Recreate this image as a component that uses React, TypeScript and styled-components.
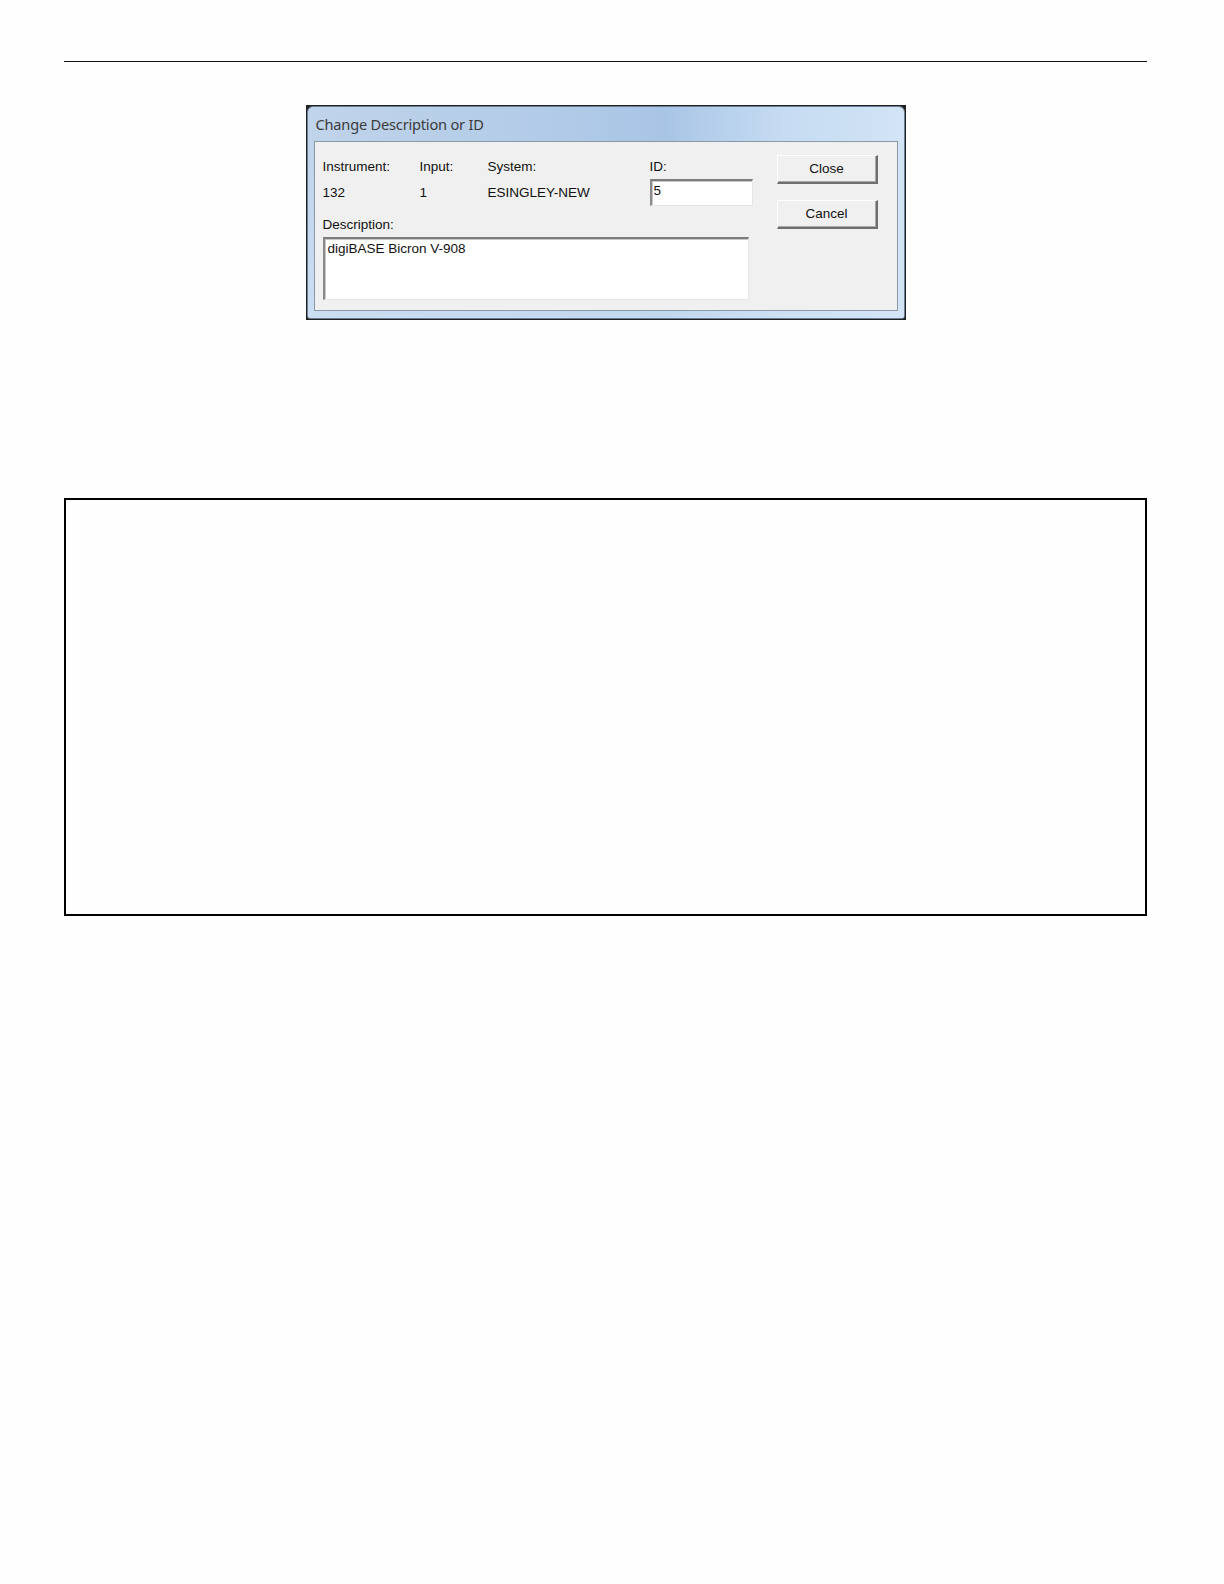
import React from 'react';
import styled, { createGlobalStyle } from 'styled-components';

const GlobalStyle = createGlobalStyle`
  html, body {
    margin: 0;
    padding: 0;
    background: #fefefe;
  }
  body {
    font-family: "Liberation Sans", Arial, sans-serif;
  }
`;

const Page = styled.div`
  width: 1083px;
  margin: 0 0 0 64px;
  padding-top: 61px;
  display: flex;
  flex-direction: column;
  align-items: center;
`;

const Rule = styled.hr`
  align-self: stretch;
  margin: 0;
  border: none;
  border-top: 1px solid #111;
`;

const Shot = styled.div`
  margin-top: 43px;
  width: 600px;
  height: 215px;
  box-sizing: border-box;
  background: #202020;
  padding: 1px;
  display: flex;
`;

const Window = styled.div`
  flex: 1;
  display: flex;
  flex-direction: column;
  border-radius: 6px 6px 3px 3px;
  border: 1px solid #6b7d93;
  background: linear-gradient(90deg, #c0d4ea 0%, #b4cce8 35%, #a9c5e6 60%, #c6dcf2 80%, #d2e4f5 100%);
  overflow: hidden;
`;

const TitleBar = styled.div`
  height: 34px;
  display: flex;
  align-items: center;
  padding-left: 8px;
  font-family: "Noto Sans", "Open Sans", sans-serif;
  font-size: 14.6px;
  letter-spacing: -0.2px;
  color: #3b3b3b;
`;

const Frame = styled.div`
  flex: 1;
  display: flex;
  padding: 0 6px 7px 6px;
  background: linear-gradient(180deg, rgba(255,255,255,0) 0%, rgba(210,228,246,0.6) 100%);
`;

const Client = styled.div`
  flex: 1;
  display: flex;
  background: #f0f0f0;
  border: 1px solid #8d98a6;
  padding: 13px 19px 0 8px;
  font-size: 13.5px;
  color: #111;
`;

const Fields = styled.div`
  width: 430px;
  margin-top: 4px;
  display: grid;
  grid-template-columns: 97px 68px 162px 103px;
  grid-template-rows: 16px 27px;
  row-gap: 4px;
  align-items: center;
  align-content: start;
`;

const Label = styled.div`
  line-height: 16px;
  white-space: nowrap;
`;

const Value = styled.div`
  line-height: 16px;
  white-space: nowrap;
`;

const sunken = `
  box-sizing: border-box;
  background: #fff;
  border-style: solid;
  border-width: 2px 1px 1px 2px;
  border-color: #7c7c7c #e6e6e6 #e6e6e6 #8a8a8a;
  box-shadow: inset 1px 1px 0 #c8c8c8;
  font-family: "Liberation Sans", Arial, sans-serif;
  font-size: 13.5px;
  color: #111;
  outline: none;
`;

const IdInput = styled.input`
  ${sunken}
  width: 103px;
  height: 27px;
  padding: 0 0 5px 2px;
`;

const DescBlock = styled.div`
  grid-column: 1 / -1;
  margin-top: 7px;
  display: flex;
  flex-direction: column;
  gap: 4px;
`;

const DescArea = styled.textarea`
  ${sunken}
  width: 426px;
  height: 63px;
  resize: none;
  padding: 2px 3px;
  line-height: 16px;
`;

const Buttons = styled.div`
  margin-left: auto;
  display: flex;
  flex-direction: column;
  gap: 16px;
`;

const Button = styled.button`
  box-sizing: border-box;
  width: 101px;
  height: 29px;
  background: #f0f0f0;
  border-style: solid;
  border-width: 1px 2px 2px 1px;
  border-color: #ffffff #6f6f6f #6f6f6f #ffffff;
  box-shadow: inset -1px -1px 0 #a8a8a8;
  font-family: "Liberation Sans", Arial, sans-serif;
  font-size: 13.5px;
  color: #111;
  padding: 0 0 2px 0;
`;

const BigBox = styled.div`
  margin-top: 178px;
  align-self: stretch;
  height: 418px;
  box-sizing: border-box;
  border: 2px solid #000;
`;

export default function App() {
  return (
    <>
      <GlobalStyle />
      <Page>
        <Rule />
        <Shot>
          <Window>
            <TitleBar>Change Description or ID</TitleBar>
            <Frame>
              <Client>
                <Fields>
                  <Label>Instrument:</Label>
                  <Label>Input:</Label>
                  <Label>System:</Label>
                  <Label>ID:</Label>
                  <Value>132</Value>
                  <Value>1</Value>
                  <Value>ESINGLEY-NEW</Value>
                  <IdInput defaultValue="5" />
                  <DescBlock>
                    <Label>Description:</Label>
                    <DescArea defaultValue="digiBASE Bicron V-908" />
                  </DescBlock>
                </Fields>
                <Buttons>
                  <Button>Close</Button>
                  <Button>Cancel</Button>
                </Buttons>
              </Client>
            </Frame>
          </Window>
        </Shot>
        <BigBox />
      </Page>
    </>
  );
}
